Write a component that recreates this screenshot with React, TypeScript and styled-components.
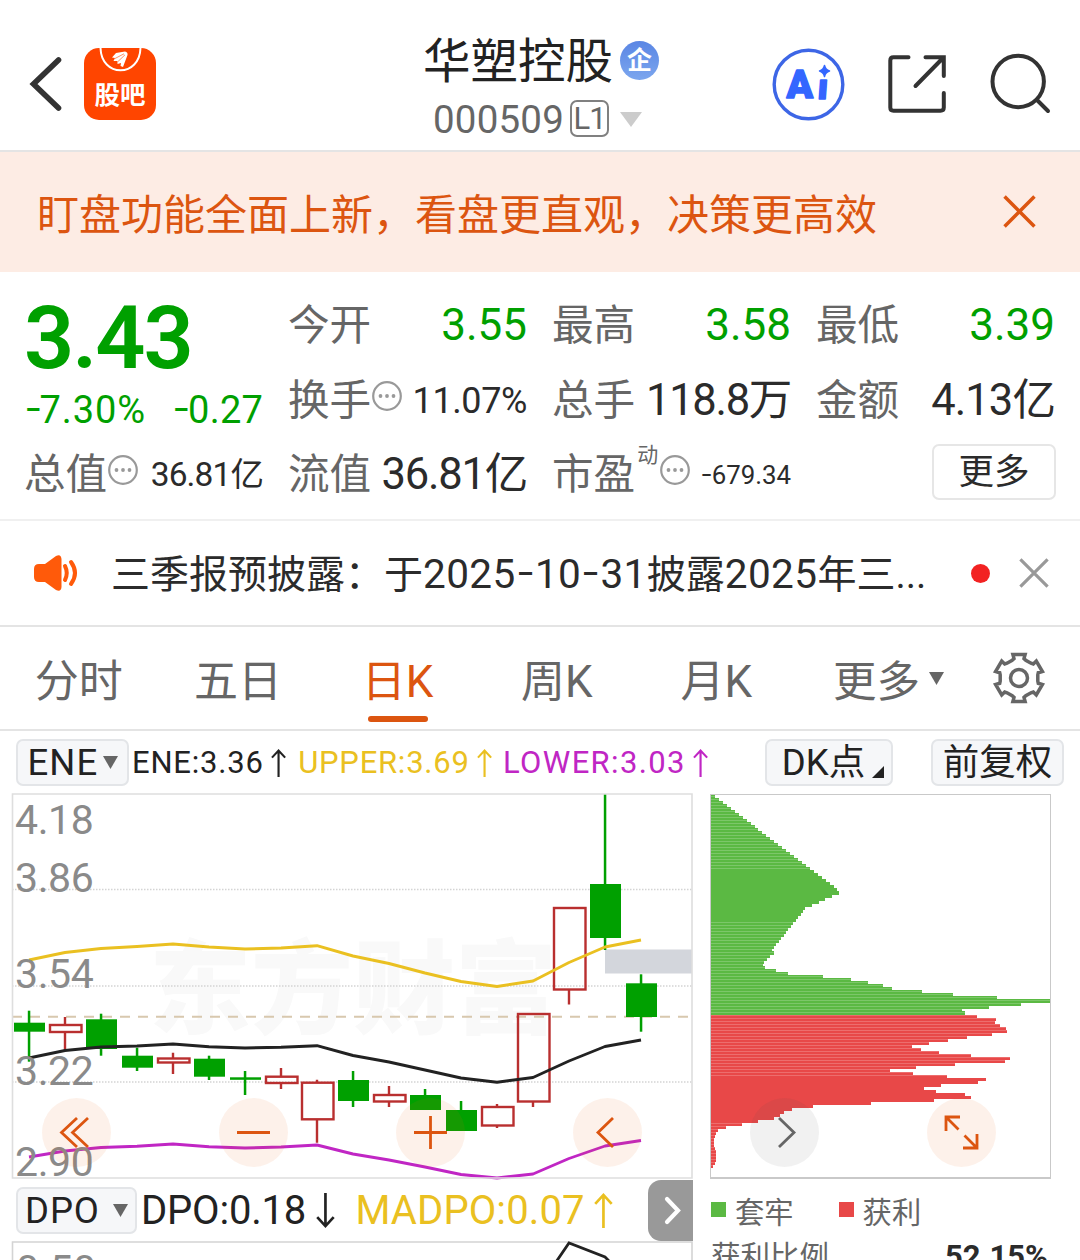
import React from "react";
import styled, { createGlobalStyle } from "styled-components";

const FONT = `Roboto, "Noto Sans CJK SC", sans-serif`;
const GREEN = "#00a000";
const ORANGE = "#dc5510";
const RED = "#b92f2f";
const YELLOW = "#eac021";
const PURPLE = "#c026c4";

const GlobalStyle = createGlobalStyle`
  * { box-sizing: border-box; }
  body { margin: 0; background: #fff; font-family: ${FONT}; color: #2b2b2b; }
  svg { display: block; flex: none; overflow: visible; }
  button { font: inherit; color: inherit; background: none; border: 0; padding: 0; margin: 0; display: block; }
`;

const Page = styled.div`
  width: 1080px;
  height: 1260px;
  overflow: hidden;
  display: flex;
  flex-direction: column;
  background: #fff;
`;

/* ---------- header ---------- */
const Header = styled.header`
  height: 152px;
  flex: none;
  display: grid;
  grid-template-columns: 360px 1fr 360px;
  border-bottom: 2px solid #e4e4e4;
`;
const HeaderLeft = styled.div`
  display: flex;
  align-items: center;
  gap: 20px;
  padding: 18px 0 0 28px;
`;
const GubaTile = styled.div`
  position: relative;
  width: 72px;
  height: 72px;
  border-radius: 15px;
  background: #ff4500;
  color: #fff;
  overflow: hidden;
  padding-top: 32px;
  text-align: center;
  font-size: 25.5px;
  font-weight: 700;
  line-height: 30px;
`;
const TileArt = styled.svg`
  position: absolute;
  left: 0;
  top: 0;
`;
const HeaderTitle = styled.div`
  display: flex;
  flex-direction: column;
  align-items: center;
  padding-top: 35px;
`;
const TitleRow = styled.div`
  display: flex;
  align-items: center;
  gap: 7px;
  height: 54px;
  margin-left: 2px;
  font-size: 47.5px;
  line-height: 56px;
  color: #222;
`;
const Badge = styled.span`
  width: 39px;
  height: 39px;
  margin-top: -3px;
  border-radius: 50%;
  background: linear-gradient(#5a86e4, #7ca6ee);
  color: #fff;
  font-size: 25px;
  font-weight: 700;
  line-height: 39px;
  text-align: center;
`;
const CodeRow = styled.div`
  display: flex;
  align-items: center;
  height: 60px;
  margin-left: -5px;
  font-size: 38.5px;
  letter-spacing: 0.2px;
  color: #666;
`;
const LevelBox = styled.span`
  width: 39px;
  height: 37px;
  margin: -1px 11px 0 6px;
  border: 2px solid #808080;
  border-radius: 7px;
  font-size: 31px;
  line-height: 34px;
  text-align: center;
  letter-spacing: -1px;
`;
const HeaderRight = styled.div`
  display: flex;
  align-items: center;
  justify-content: flex-end;
  gap: 42px;
  padding: 18px 27px 0 0;
`;

/* ---------- banner ---------- */
const Banner = styled.section`
  height: 120px;
  flex: none;
  display: flex;
  align-items: center;
  justify-content: space-between;
  padding: 7px 44px 0 37px;
  background: #fdece4;
  color: ${ORANGE};
  font-size: 42px;
  line-height: 60px;
  svg { margin-top: -8px; }
`;

/* ---------- quote ---------- */
const Quote = styled.section`
  height: 249px;
  flex: none;
  display: grid;
  grid-template-columns: repeat(4, 237px);
  grid-template-rows: 76px 75px 73px;
  column-gap: 27px;
  padding: 15px 25px 0 26px;
  border-bottom: 2px solid #f0f0f0;
`;
const PriceCell = styled.div`
  grid-row: 1 / 3;
  color: ${GREEN};
`;
const Price = styled.div`
  height: 100px;
  line-height: 102px;
  font-size: 88px;
  font-weight: 600;
  letter-spacing: -2px;
  margin-left: -2px;
`;
const Change = styled.div`
  display: flex;
  justify-content: space-between;
  line-height: 47px;
  font-size: 38px;
  letter-spacing: 0.2px;
  span:first-child { letter-spacing: 0.9px; }
`;
const Minus = styled.i<{ $m: number }>`
  display: inline-block;
  font-style: normal;
  letter-spacing: 0;
  margin: 0 ${(p) => p.$m}px;
  transform: translateY(-0.04em) scaleX(1.35);
`;
const Cell = styled.div`
  display: flex;
  align-items: center;
  white-space: nowrap;
`;
const Label = styled.span`
  margin-left: -2px;
  padding-top: 1px;
  font-size: 41.6px;
  line-height: 60px;
  color: #666;
`;
const Value = styled.span<{ $size?: number; $ls?: number; $green?: boolean }>`
  margin-left: auto;
  font-size: ${(p) => p.$size ?? 44}px;
  letter-spacing: ${(p) => p.$ls ?? 0}px;
  line-height: 60px;
  color: ${(p) => (p.$green ? GREEN : "#2b2b2b")};
`;
const Sup = styled.sup`
  align-self: flex-start;
  margin: 5px 1px 0 2px;
  font-size: 21px;
  line-height: 24px;
  color: #666;
`;
const MoreButton = styled.button`
  width: 124px;
  height: 56px;
  margin: -5px -1px 0 auto;
  border: 2px solid #e6e6e6;
  border-radius: 7px;
  font-size: 35.5px;
  line-height: 51px;
`;

/* ---------- news ---------- */
const News = styled.section`
  height: 106px;
  flex: none;
  display: flex;
  align-items: center;
  padding: 0 29px 0 32px;
  border-bottom: 2px solid #e4e4e4;
`;
const NewsText = styled.span`
  width: 842px;
  margin-left: 31px;
  padding-top: 3px;
  font-size: 39px;
  line-height: 60px;
  white-space: nowrap;
`;
const Digits = styled.span`
  font-size: 40.5px;
  letter-spacing: 0.4px;
`;
const RedDot = styled.i`
  width: 19px;
  height: 19px;
  margin: 0 29px 0 18px;
  border-radius: 50%;
  background: #f22222;
  flex: none;
`;

/* ---------- tabs ---------- */
const Tabs = styled.nav`
  height: 104px;
  flex: none;
  display: flex;
  border-bottom: 2px solid #e4e4e4;
`;
const Tab = styled.button<{ $active?: boolean }>`
  width: 159.4px;
  height: 102px;
  display: flex;
  flex-direction: column;
  align-items: center;
  padding-top: 24px;
  font-size: 44px;
  line-height: 62px;
  text-indent: -2px;
  color: ${(p) => (p.$active ? ORANGE : "#666")};
  &::after {
    content: "";
    width: 60px;
    height: 6px;
    margin-top: 3px;
    border-radius: 3px;
    background: ${(p) => (p.$active ? ORANGE : "transparent")};
  }
`;
const MoreTab = styled.button`
  display: flex;
  align-items: center;
  gap: 9px;
  margin: 0 48px 0 36px;
  font-size: 43.5px;
  color: #666;
`;

/* ---------- indicators ---------- */
const IndicatorBar = styled.div`
  height: 62px;
  flex: none;
  display: flex;
  align-items: center;
  padding: 0 16px;
`;
const Chip = styled.button<{ $w: number; $ls?: number; $gap?: number; $ml?: number }>`
  width: ${(p) => p.$w}px;
  height: 47px;
  display: flex;
  align-items: center;
  justify-content: center;
  gap: ${(p) => p.$gap ?? 6}px;
  margin-left: ${(p) => p.$ml ?? 0}px;
  padding-top: 1px;
  flex: none;
  border: 2px solid #e3e5e8;
  border-radius: 7px;
  background: #f6f7f9;
  font-size: 36.5px;
  letter-spacing: ${(p) => p.$ls ?? 0}px;
  line-height: 45px;
  color: #222;
`;
const CornerMark = styled.svg`
  margin: 18px -8px 0 2px;
`;
const Reading = styled.span<{ $color: string; $size: number; $ls: number; $ml: number }>`
  display: flex;
  align-items: center;
  gap: ${(p) => p.$size / 4.2}px;
  margin-left: ${(p) => p.$ml}px;
  padding-top: 1px;
  font-size: ${(p) => p.$size}px;
  letter-spacing: ${(p) => p.$ls}px;
  color: ${(p) => p.$color};
  white-space: nowrap;
`;
const Spacer = styled.i`
  flex: 1;
`;

/* ---------- charts ---------- */
const Charts = styled.main`
  display: grid;
  grid-template-columns: 681px 341px;
  column-gap: 17px;
  padding-left: 12px;
`;
const Column = styled.div`
  min-width: 0;
`;
const ChartPanel = styled.div`
  position: relative;
  height: 386px;
`;
const Controls = styled.div<{ $left: number }>`
  position: absolute;
  top: 305px;
  left: ${(p) => p.$left}px;
  display: flex;
  gap: 108px;
`;
const RoundButton = styled.button<{ $gray?: boolean }>`
  width: 69px;
  height: 69px;
  border-radius: 50%;
  background: ${(p) => (p.$gray ? "rgba(80,80,80,.08)" : "rgba(237,100,20,.09)")};
`;
const DpoBar = styled.div`
  height: 62px;
  display: flex;
  align-items: center;
  padding-left: 4px;
`;
const NextTab = styled.button`
  width: 45px;
  height: 61px;
  margin-left: auto;
  border-radius: 13px 0 0 13px;
  background: #999;
`;
const Legend = styled.div`
  display: flex;
  align-items: center;
  height: 58px;
  padding: 3px 0 0 1px;
  gap: 9px;
  font-size: 29.3px;
  color: #666;
`;
const Swatch = styled.i<{ $color: string; $ml?: number }>`
  width: 15px;
  height: 15px;
  margin-left: ${(p) => p.$ml ?? 0}px;
  background: ${(p) => p.$color};
`;
const RatioRow = styled.div`
  display: flex;
  justify-content: space-between;
  padding: 1px 3px 0 1px;
  font-size: 29.5px;
  line-height: 38px;
  color: #666;
  b { font-size: 31px; color: #2b2b2b; }
`;

const DotsIcon = styled.svg`
  margin-top: -10px;
`;
const Dots = () => (
  <DotsIcon width="32" height="32" viewBox="0 0 32 32">
    <circle cx="16" cy="16" r="13.8" fill="none" stroke="#999" strokeWidth="2.2" />
    {[9.5, 16, 22.5].map((x) => <circle key={x} cx={x} cy="16" r="1.9" fill="#999" />)}
  </DotsIcon>
);

const Triangle = ({ w, h, color }: { w: number; h: number; color: string }) => (
  <svg width={w} height={h}><path d={`M0 0H${w}L${w / 2} ${h}Z`} fill={color} /></svg>
);

const Cross = ({ size, color }: { size: number; color: string }) => (
  <svg width={size} height={size} viewBox="0 0 32 32">
    <path d="M1.5 1.5L30.5 30.5M30.5 1.5L1.5 30.5" stroke={color} strokeWidth="3.4" />
  </svg>
);

const Arrow = ({ h, down }: { h: number; down?: boolean }) => (
  <svg width={h * 0.54} height={h} viewBox="0 0 18 34">
    <path
      d={down ? "M9 0V32M1 23.5L9 32.2L17 23.5" : "M9 34V2M1 10.5L9 1.8L17 10.5"}
      fill="none"
      stroke="currentColor"
      strokeWidth="2.6"
    />
  </svg>
);

const gearPath = (() => {
  const pts: string[] = [];
  for (let i = 0; i < 6; i++) {
    [[-21, 19], [-14.5, 20], [-14.5, 24.3], [14.5, 24.3], [14.5, 20], [21, 19]].forEach(([a, r]) => {
      const t = ((i * 60 + a - 90) * Math.PI) / 180;
      pts.push(`${(27 + r * Math.cos(t)).toFixed(1)} ${(27 + r * Math.sin(t)).toFixed(1)}`);
    });
  }
  return `M${pts.join("L")}Z`;
})();

/* Candles: [body top, body bottom, high, low, rising] in panel pixels, 36px apart */
type Candle = [number, number, number, number, boolean];
const candles: Candle[] = [
  [1022.7, 1031.7, 1010.7, 1061.7, false], [1025, 1032, 1017, 1050, true],
  [1019.3, 1049, 1013.7, 1055.7, false], [1055.7, 1067.7, 1047.7, 1071, false],
  [1058.5, 1062.5, 1052.7, 1074, true], [1058.7, 1076.7, 1055.7, 1080, false],
  [1077.3, 1079.8, 1071, 1095, false], [1076.7, 1083, 1068, 1089, true],
  [1082.7, 1119.3, 1079.7, 1142.7, true], [1080, 1101, 1071, 1107, false],
  [1095, 1101.5, 1086, 1107, true], [1095, 1110, 1089, 1110, false],
  [1110, 1131, 1101, 1131, false], [1107, 1125.5, 1104, 1128, true],
  [1014, 1101.5, 1013, 1107, true], [908, 989.5, 907, 1004.5, true],
  [884, 938, 794, 950, false], [983.3, 1017, 974.3, 1031.7, false],
];
const upper = [960, 952.5, 948.5, 946.5, 944, 947, 949, 948, 945.7, 956, 963.5, 973, 981.5, 986.5, 981, 962.5, 947, 940];
const middle = [1058, 1050.5, 1047, 1046, 1044, 1046.7, 1048, 1047.3, 1045.7, 1055.5, 1062, 1070, 1078, 1082.3, 1077.5, 1061, 1046.5, 1040];
const lower = [1157, 1151, 1147.5, 1146.3, 1144, 1146.7, 1148, 1147, 1145, 1154, 1160, 1167, 1174.5, 1178, 1174, 1158.5, 1146, 1140.5];
const points = (ys: number[]) => ys.map((y, i) => `${29 + i * 36},${y}`).join(" ");
const axis: [string, number][] = [["4.18", 833.5], ["3.86", 891.5], ["3.54", 987.5], ["3.22", 1084.5], ["2.90", 1176]];

const CandleChart = () => (
  <svg width="681" height="386" viewBox="12 793 681 386" fontFamily={FONT}>
    <text x="149" y="1026" fontSize="102" fontWeight="900" fill="#f9f9f9">东方财富</text>
    {[889.5, 986, 1082].map((y) => (
      <path key={y} d={`M12 ${y}H692`} stroke="#d4d4d4" strokeWidth="1.3" strokeDasharray="1.5 1.5" />
    ))}
    <path d="M12 1016.7H692" stroke="#d8c8ae" strokeWidth="2" strokeDasharray="10 8" />
    <rect x="605" y="949.5" width="87" height="24" fill="#d3d6dc" />
    {candles.map(([t, b, hi, lo, up], i) => {
      const x = 29 + i * 36;
      return up ? (
        <g key={i} stroke={RED} strokeWidth="2.4" fill="none">
          <path d={`M${x} ${hi}V${t}M${x} ${b}V${lo}`} />
          <rect x={x - 15} y={t} width="31.5" height={b - t} />
        </g>
      ) : (
        <g key={i} fill={GREEN}>
          <rect x={x - 1.2} y={hi} width="2.5" height={lo - hi} />
          <rect x={x - 15} y={t} width="31" height={b - t} />
        </g>
      );
    })}
    <g fill="none" strokeWidth="2.9" strokeLinejoin="round">
      <polyline points={points(upper)} stroke={YELLOW} />
      <polyline points={points(middle)} stroke="#222" />
      <polyline points={points(lower)} stroke={PURPLE} />
    </g>
    <g fontSize="41" fill="#8a8a8a" letterSpacing="-.4">
      {axis.map(([t, y]) => <text key={t} x="15" y={y}>{t}</text>)}
    </g>
    <path d="M12.5 794H692V1178H12.5Z" fill="none" stroke="#dedede" strokeWidth="1.6" />
  </svg>
);

/* Cost distribution: one bar length per 3px price step */
const climb = Array.from({ length: 32 }, (_, i) => 4 + i * 3.95);
const slope = Array.from({ length: 14 }, (_, i) => 92 - i * 2.42);
const trapped = [
  ...climb, 127.5, 120.5, 114, 107.5, 100.5, 94, ...slope,
  62.5, 59, 55.5, 53, 52, 53.5, 65, 77, 111.5, 140, 156.5, 172, 181, 210.5, 241.5, 286, 338.5, 310, 277.5, 250.5, 254,
];
const profit = [
  266, 285, 284, 289, 295, 295.5, 281, 256, 237, 218, 201, 210, 228, 260, 299, 293.5, 244, 204.5, 179, 201.5,
  236, 275, 267, 230, 212.5, 224.5, 254, 259.5, 223, 160, 102, 81, 73, 69, 63, 47, 30.5, 15, 7.3, 5.3, 4, 3.3,
  2.8, 3, 4, 4.7, 5.2, 5.3, 4.7, 3.7, 1.7,
];
const SPLIT = 1015;
const trappedTop = SPLIT - 1 - trapped.length * 3;

const DistributionChart = () => (
  <svg width="341" height="386" viewBox="710 793 341 386" shapeRendering="crispEdges">
    <defs>
      <pattern id="stripe" width="4" height="3" patternUnits="userSpaceOnUse">
        <rect y="1" width="4" height="1" fill="#fff" opacity=".2" />
      </pattern>
      <clipPath id="bars">
        {trapped.map((w, i) => <rect key={`t${i}`} x="711" y={trappedTop + i * 3} width={w} height="3.5" />)}
        {profit.map((w, i) => <rect key={`p${i}`} x="711" y={SPLIT - 0.5 + i * 3} width={w} height="3" />)}
      </clipPath>
    </defs>
    <path d="M710.5 794.5H1050.5V1178H710.5Z" fill="none" stroke="#c9c9c9" strokeWidth="1.5" />
    <g clipPath="url(#bars)">
      <rect x="711" y="790" width="340" height={SPLIT - 790} fill="#5bb943" />
      <rect x="711" y={SPLIT} width="340" height="170" fill="#e84848" />
      <rect x="711" y="793" width="340" height="77" fill="url(#stripe)" />
      <rect x="711" y="921" width="340" height="155" fill="url(#stripe)" />
      <rect x="711" y="1123" width="340" height="50" fill="url(#stripe)" />
    </g>
  </svg>
);

const Glyph = ({ d, color = ORANGE }: { d: string; color?: string }) => (
  <svg width="69" height="69"><path d={d} fill="none" stroke={color} strokeWidth="2.8" /></svg>
);

export default function App() {
  return (
    <Page>
      <GlobalStyle />
      <Header>
        <HeaderLeft>
          <svg width="36" height="60" viewBox="28 54 36 60">
            <path d="M58.5 60L33.5 84L58.5 108" fill="none" stroke="#333" strokeWidth="5.6" strokeLinecap="round" />
          </svg>
          <GubaTile>
            <TileArt width="72" height="30" viewBox="84 48 72 30">
              <path d="M100.5 47C100.5 78 140.5 78 140.5 47" fill="none" stroke="#fff" strokeWidth="2" />
              <path d="M112 57.5L116 53L125 51.5Q128 52 127.5 55L123 67L120.5 66L121 63L117.5 64L117.5 61L113.5 61L115 58Z" fill="#fff" />
              <path d="M115 58.5L124 53.8M118 61.5L125 54.8" stroke="#ff4500" strokeWidth=".6" />
            </TileArt>
            股吧
          </GubaTile>
        </HeaderLeft>
        <HeaderTitle>
          <TitleRow>华塑控股<Badge>企</Badge></TitleRow>
          <CodeRow>000509<LevelBox>L1</LevelBox><Triangle w={22} h={15} color="#ccc" /></CodeRow>
        </HeaderTitle>
        <HeaderRight>
          <svg width="73" height="73" viewBox="771.5 47.5 73 73" fontFamily={FONT}>
            <circle cx="808" cy="84" r="34.3" fill="none" stroke="#3d66e6" strokeWidth="3.4" />
            <g fill="#3366ff" stroke="#3366ff" fontWeight="900" strokeWidth="1.5" strokeLinejoin="round">
              <text x="786" y="97" fontSize="39">A</text>
              <text x="816.5" y="98.5" fontSize="36" transform="skewX(-4) translate(6.8 0)">ı</text>
              <path d="M824 65Q825 69.5 829 70.5Q825 71.5 824 76Q823 71.5 819 70.5Q823 69.5 824 65Z" />
            </g>
          </svg>
          <svg width="60" height="60" viewBox="886.5 54 60 60">
            <path d="M908 57.3H893Q889.8 57.3 889.8 60.5V107.5Q889.8 110.7 893 110.7H940Q943.3 110.7 943.3 107.5V93M943.3 76V57.3H925M942 58.5L915 86" fill="none" stroke="#333" strokeWidth="4" strokeLinecap="round" />
          </svg>
          <svg width="64" height="64" viewBox="989.5 52 64 64">
            <g fill="none" stroke="#333" strokeWidth="4" strokeLinecap="round">
              <circle cx="1018.7" cy="81.5" r="25.7" />
              <path d="M1037.5 100L1048.5 111" />
            </g>
          </svg>
        </HeaderRight>
      </Header>

      <Banner>盯盘功能全面上新，看盘更直观，决策更高效<Cross size={33} color={ORANGE} /></Banner>

      <Quote>
        <PriceCell>
          <Price>3.43</Price>
          <Change>
            <span><Minus $m={1.5}>-</Minus>7.30%</span>
            <span><Minus $m={1.5}>-</Minus>0.27</span>
          </Change>
        </PriceCell>
        <Cell><Label>今开</Label><Value $green>3.55</Value></Cell>
        <Cell><Label>最高</Label><Value $green>3.58</Value></Cell>
        <Cell><Label>最低</Label><Value $green>3.39</Value></Cell>
        <Cell><Label>换手</Label><Dots /><Value $size={36} $ls={-0.4}>11.07%</Value></Cell>
        <Cell><Label>总手</Label><Value $size={43.5} $ls={-1.3}>118.8万</Value></Cell>
        <Cell><Label>金额</Label><Value $size={43.5} $ls={-0.9}>4.13亿</Value></Cell>
        <Cell><Label>总值</Label><Dots /><Value $size={33.5} $ls={-0.9}>36.81亿</Value></Cell>
        <Cell><Label>流值</Label><Value $size={43.5} $ls={-1.2}>36.81亿</Value></Cell>
        <Cell><Label>市盈</Label><Sup>动</Sup><Dots /><Value $size={25.8}><Minus $m={1.5}>-</Minus>679.34</Value></Cell>
        <Cell><MoreButton>更多</MoreButton></Cell>
      </Quote>

      <News>
        <svg width="48" height="40" viewBox="32 553 48 40">
          <path d="M34 569Q34 564 39 564H45L56 556Q61 553.5 61.5 559V587Q61 592.5 56 590L45 582H39Q34 582 34 577Z" fill="#ff5a0a" />
          <path d="M65 566Q68.5 573 65 580M71 562Q79 573 71 584" fill="none" stroke="#ff5a0a" strokeWidth="4" strokeLinecap="round" />
        </svg>
        <NewsText>
          三季报预披露：于<Digits>2025<Minus $m={4}>-</Minus>10<Minus $m={4}>-</Minus>31</Digits>披露<Digits>2025</Digits>年三...
        </NewsText>
        <RedDot />
        <Cross size={30} color="#999" />
      </News>

      <Tabs>
        <Tab>分时</Tab>
        <Tab>五日</Tab>
        <Tab $active>日K</Tab>
        <Tab>周K</Tab>
        <Tab>月K</Tab>
        <MoreTab>更多<Triangle w={15} h={13} color="#666" /></MoreTab>
        <svg width="54" height="102" viewBox="0 -24 54 102">
          <g fill="none" stroke="#666" strokeWidth="3.5">
            <path d={gearPath} />
            <circle cx="27" cy="27" r="8.5" />
          </g>
        </svg>
      </Tabs>

      <IndicatorBar>
        <Chip $w={113} $ls={1.2} $gap={4}>ENE<Triangle w={15} h={13} color="#666" /></Chip>
        <Reading $color="#222" $size={31} $ls={0.8} $ml={3}>ENE:3.36<Arrow h={28} /></Reading>
        <Reading $color={YELLOW} $size={31} $ls={0.75} $ml={12}>UPPER:3.69<Arrow h={28} /></Reading>
        <Reading $color={PURPLE} $size={31} $ls={1.35} $ml={11}>LOWER:3.03<Arrow h={28} /></Reading>
        <Spacer />
        <Chip $w={128} $gap={5}>
          DK点<CornerMark width="12" height="12"><path d="M12 0V12H0Z" fill="#222" /></CornerMark>
        </Chip>
        <Chip $w={133} $ml={38}>前复权</Chip>
      </IndicatorBar>

      <Charts>
        <Column>
          <ChartPanel>
            <CandleChart />
            <Controls $left={30}>
              <RoundButton><Glyph d="M35 20L19.5 34.5L35 49M46 20L30.5 34.5L46 49" /></RoundButton>
              <RoundButton><Glyph d="M18 34.5H51" /></RoundButton>
              <RoundButton><Glyph d="M18 34.5H51M34.5 18V51" /></RoundButton>
              <RoundButton><Glyph d="M40 20L25 34.5L40 49" /></RoundButton>
            </Controls>
          </ChartPanel>
          <DpoBar>
            <Chip $w={121} $gap={13} $ls={0.9}>DPO<Triangle w={15} h={13} color="#666" /></Chip>
            <Reading $color="#222" $size={40} $ls={-0.2} $ml={4}>DPO:0.18<Arrow h={35} down /></Reading>
            <Reading $color={YELLOW} $size={40} $ls={0.1} $ml={21}>MADPO:0.07<Arrow h={35} /></Reading>
            <NextTab>
              <svg width="45" height="61"><path d="M19 19L30 30.5L19 42" fill="none" stroke="#fff" strokeWidth="4.2" strokeLinecap="round" /></svg>
            </NextTab>
          </DpoBar>
          <svg width="681" height="60" viewBox="12 1241 681 60" fontFamily={FONT}>
            <path d="M12.5 1300V1242H692V1300" fill="none" stroke="#d4d4d4" strokeWidth="1.6" />
            <text x="16" y="1284" fontSize="41" fill="#8a8a8a">0.50</text>
            <polyline points="556,1262 569,1243 605,1257 612,1264" fill="none" stroke="#222" strokeWidth="2.8" />
          </svg>
        </Column>
        <Column>
          <ChartPanel>
            <DistributionChart />
            <Controls $left={40}>
              <RoundButton $gray><Glyph color="#666" d="M29 20L44 34.5L29 49" /></RoundButton>
              <RoundButton>
                <Glyph d="M19 33V19H33M19.5 19.5L31.5 31.5M50 36V50H36M49.5 49.5L37.5 37.5" />
              </RoundButton>
            </Controls>
          </ChartPanel>
          <Legend>
            <Swatch $color="#5bb943" />套牢
            <Swatch $color="#e84848" $ml={36} />获利
          </Legend>
          <RatioRow>获利比例<b>52.15%</b></RatioRow>
        </Column>
      </Charts>
    </Page>
  );
}
